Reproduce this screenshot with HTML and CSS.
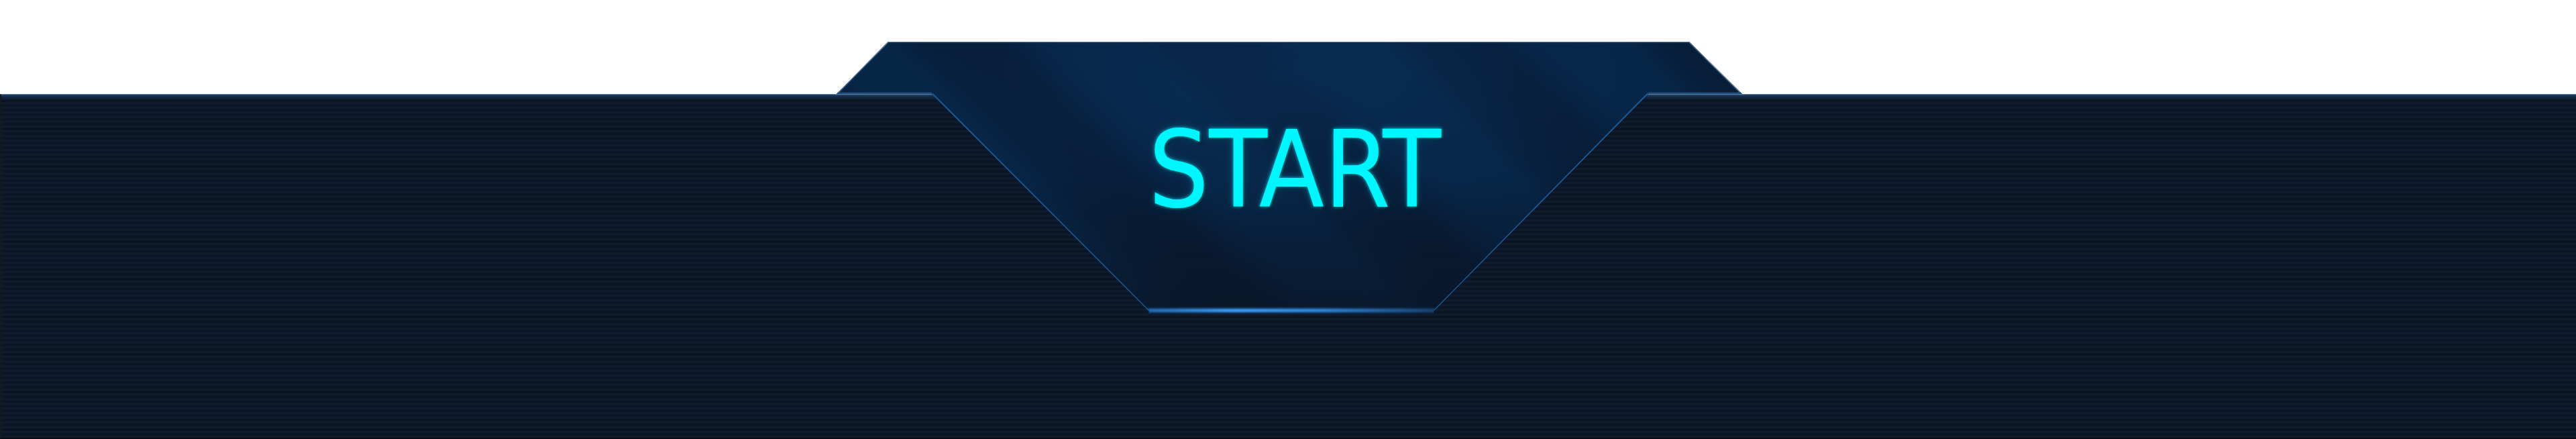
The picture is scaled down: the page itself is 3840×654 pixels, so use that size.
FILE: index.html
```html
<!DOCTYPE html>
<html lang="en">
<head>
<meta charset="utf-8">
<title>Start</title>
<link rel="stylesheet" href="styles.css">
</head>
<body>
<div class="stage">
  <div class="panel"></div>
  <div class="tab">
    <svg class="tab-edges" width="1350" height="406" viewBox="0 0 1350 406" aria-hidden="true">
      <defs>
        <linearGradient id="glow" gradientUnits="userSpaceOnUse" x1="464" y1="0" x2="892" y2="0">
          <stop offset="0" stop-color="#1f66ac"/>
          <stop offset="0.3" stop-color="#3595ec"/>
          <stop offset="0.6" stop-color="#2a80d0"/>
          <stop offset="1" stop-color="#173f6b"/>
        </linearGradient>
        <filter id="soft" filterUnits="userSpaceOnUse" x="440" y="385" width="480" height="30">
          <feGaussianBlur stdDeviation="1.5"/>
        </filter>
      </defs>
      <path d="M0,78 L77,0 L1271,0 L1350,78" fill="none" stroke="#0d3056" stroke-width="6" stroke-opacity="0.6"/>
      <path d="M0,78 L77,0 L1271,0 L1350,78" fill="none" stroke="#8197ae" stroke-width="2"/>
      <path d="M0,78 L142,78 M1210,78 L1350,78" fill="none" stroke="#1d4b7a" stroke-width="5"/>
      <path d="M142,78 L464,401 M892,401 L1210,78" fill="none" stroke="#1c5a96" stroke-width="4"/>
      <path d="M464,400.5 L892,400.5" fill="none" stroke="url(#glow)" stroke-width="6" filter="url(#soft)"/>
      <path d="M466,400.5 L890,400.5" fill="none" stroke="url(#glow)" stroke-width="3"/>
    </svg>
    <span class="label">START</span>
  </div>
</div>
</body>
</html>
```

FILE: styles.css
```css
html, body {
  margin: 0;
  padding: 0;
  background: #ffffff;
}

.stage {
  position: relative;
  width: 100%;
  height: 654px;
  overflow: hidden;
}

.panel {
  margin-top: 140px;
  height: 514px;
  box-sizing: border-box;
  border-top: 1px solid #6a7f95;
  border-left: 2px solid #15181d;
  border-bottom: 2px solid #0a0b0d;
  background:
    linear-gradient(to bottom, #1c4169 0, #173559 2px, rgba(20, 45, 75, 0.5) 4px, rgba(12, 22, 38, 0) 8px),
    repeating-linear-gradient(to bottom, #0b1524 0, #0b1524 4px, #0f1c30 4px, #0f1c30 7px);
}

.tab {
  position: absolute;
  top: 62px;
  left: 50%;
  margin-left: -673px;
  width: 1350px;
  height: 406px;
  display: flex;
  flex-direction: column;
  align-items: center;
  box-sizing: border-box;
  padding-top: 112px;
  padding-left: 16px;
  clip-path: polygon(77px 0, 1271px 0, 1350px 78px, 1210px 78px, 890px 402px, 892px 406px, 464px 406px, 466px 402px, 142px 78px, 0 78px);
  background:
    radial-gradient(ellipse 600px 240px at 50% 12%, rgba(12, 52, 98, 0.5), rgba(12, 52, 98, 0) 100%),
    linear-gradient(to bottom, rgba(10, 22, 40, 0) 0, rgba(10, 22, 40, 0) 50%, rgba(10, 20, 36, 0.7) 100%),
    repeating-linear-gradient(45deg, #072545 0, #072545 80px, #071f3b 110px, #071c36 160px, #071c36 200px, #072140 230px, #072545 260px),
    #06213e;
}

.tab-edges {
  position: absolute;
  left: 0;
  top: 0;
}

.label {
  position: relative;
  font-family: "DejaVu Sans Condensed", "Liberation Sans", sans-serif;
  font-size: 158px;
  line-height: 1;
  letter-spacing: 0;
  color: #00f6ff;
  text-shadow:
    0 0 4px rgba(0, 255, 255, 0.7),
    0 0 12px rgba(0, 220, 255, 0.3),
    3px 4px 4px rgba(0, 0, 0, 0.45);
}
```
